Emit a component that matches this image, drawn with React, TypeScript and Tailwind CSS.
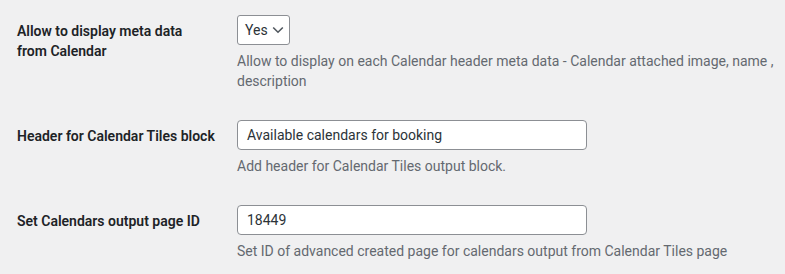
import React from "react";

const font = "font-['Segoe_UI',Roboto,'Liberation_Sans',sans-serif]";

function Row({
  label,
  children,
  description,
}: {
  label: React.ReactNode;
  children: React.ReactNode;
  description: React.ReactNode;
}) {
  return (
    <div className="flex">
      <div className="w-[210px] shrink-0 pr-[10px] pt-[21px] pb-5 text-sm font-semibold leading-5 text-[#1d2327]">
        {label}
      </div>
      <div className="flex-1 px-[10px] pt-[15px] pb-[14px]">
        {children}
        <p className="mt-[6px] text-sm leading-5 text-[#646970]">{description}</p>
      </div>
    </div>
  );
}

export default function App() {
  return (
    <div className={`min-h-screen bg-[#f0f0f1] pl-[17px] ${font}`}>
      <Row
        label={
          <>
            Allow to display meta data
            <br />
            from Calendar
          </>
        }
        description={
          <>
            Allow to display on each Calendar header meta data - Calendar attached image, name ,
            <br />
            description
          </>
        }
      >
        <div className="flex h-[30px] w-[53px] items-center justify-between rounded-[3px] border border-[#8c8f94] bg-white pl-[7px] pr-[5px] text-sm text-[#2c3338]">
          <span>Yes</span>
          <svg width="12" height="8" viewBox="0 0 12 8" fill="none" aria-hidden="true">
            <path d="M1.2 1.5 6 6.2l4.8-4.7" stroke="#50575e" strokeWidth="1.6" />
          </svg>
        </div>
      </Row>

      <Row label="Header for Calendar Tiles block" description="Add header for Calendar Tiles output block.">
        <div className="flex h-[30px] w-[350px] items-center rounded-[4px] border border-[#8c8f94] bg-white px-[9px] text-sm text-[#2c3338]">
          Available calendars for booking
        </div>
      </Row>

      <Row
        label="Set Calendars output page ID"
        description="Set ID of advanced created page for calendars output from Calendar Tiles page"
      >
        <div className="flex h-[30px] w-[350px] items-center rounded-[4px] border border-[#8c8f94] bg-white px-[9px] text-sm text-[#2c3338]">
          18449
        </div>
      </Row>
    </div>
  );
}
